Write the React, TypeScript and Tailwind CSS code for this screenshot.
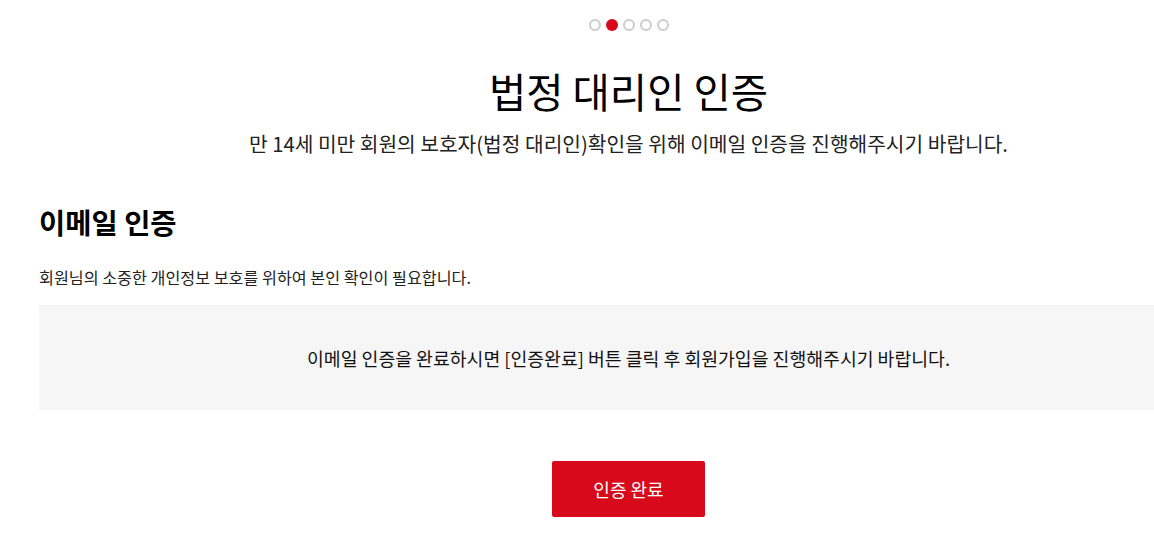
export default function App() {
    const steps = [0, 1, 2, 3, 4];
    const active = 1;

    return (
        <div className="h-[553px] w-full overflow-hidden bg-white font-['Noto_Sans_CJK_KR',sans-serif] text-[#111]">
            <div className="ml-[39px] w-[1179px]">
                <div className="flex justify-center gap-[5px] pt-[19px]">
                    {steps.map((s) => (
                        <span
                            key={s}
                            className={
                                s === active
                                    ? 'h-[12px] w-[12px] rounded-full bg-[#d7091a]'
                                    : 'h-[12px] w-[12px] rounded-full border-2 border-[#cccccc]'
                            }
                        />
                    ))}
                </div>

                <h1 className="mt-[32px] text-center text-[40.5px] leading-[56px] font-normal text-black">
                    법정 대리인 인증
                </h1>
                <p className="mt-[10px] text-center text-[20.3px] leading-[28px] text-[#222]">
                    만 14세 미만 회원의 보호자(법정 대리인)확인을 위해 이메일 인증을 진행해주시기 바랍니다.
                </p>

                <h2 className="mt-[45px] text-[28.5px] leading-[40px] font-bold text-black">이메일 인증</h2>
                <p className="mt-[23px] text-[16.2px] leading-[24px] text-[#222]">
                    회원님의 소중한 개인정보 보호를 위하여 본인 확인이 필요합니다.
                </p>

                <div className="mt-[16px] flex h-[105px] items-center justify-center bg-[#f6f6f6]">
                    <p className="text-[18.3px] leading-[26px] text-[#111]">
                        이메일 인증을 완료하시면 [인증완료] 버튼 클릭 후 회원가입을 진행해주시기 바랍니다.
                    </p>
                </div>

                <div className="mt-[51px] flex justify-center">
                    <button
                        type="button"
                        className="h-[56px] w-[153px] rounded-[2px] bg-[#d7091a] text-[18px] text-white"
                    >
                        인증 완료
                    </button>
                </div>
            </div>
        </div>
    );
}
